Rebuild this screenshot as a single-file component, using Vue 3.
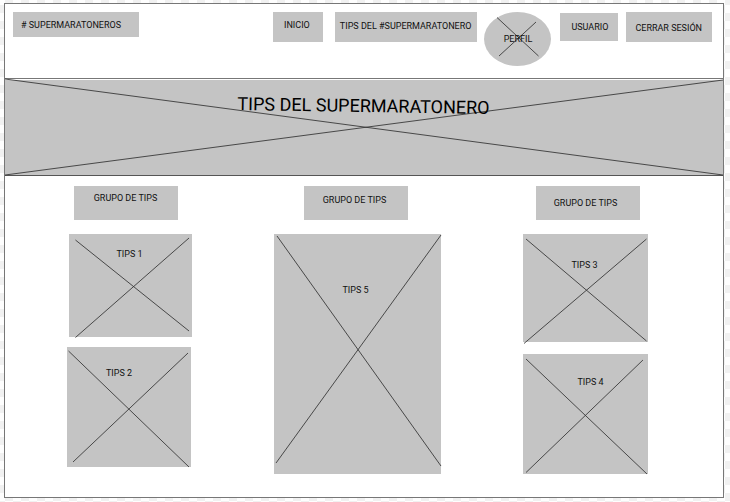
<script setup>
const navItems = [
  { label: 'INICIO', kind: 'home' },
  { label: 'TIPS DEL #SUPERMARATONERO', kind: 'tips' },
  { label: 'PERFIL', kind: 'profile' },
  { label: 'USUARIO', kind: 'user' },
  { label: 'CERRAR SESIÓN', kind: 'logout' },
]

// Each card carries its drawing area and the two crossing strokes [x1, y1, x2, y2].
const groups = [
  {
    id: 'left',
    title: 'GRUPO DE TIPS',
    cards: [
      { id: 1, w: 124, h: 103, lines: [[6.5, 6, 121, 97], [121, 4, 6.5, 103.5]] },
      { id: 2, w: 124, h: 120, lines: [[1.5, 4, 122, 120], [121, 6, 6, 115]] },
    ],
  },
  {
    id: 'middle',
    title: 'GRUPO DE TIPS',
    cards: [{ id: 5, w: 167, h: 241, lines: [[3, 2, 167, 233], [167, 1, 2, 230]] }],
  },
  {
    id: 'right',
    title: 'GRUPO DE TIPS',
    cards: [
      { id: 3, w: 124, h: 108, lines: [[3, 5, 122.5, 107], [122.5, 5, 1, 109.5]] },
      { id: 4, w: 124, h: 120, lines: [[3, 5, 123, 120], [119, 6, 3, 118.5]] },
    ],
  },
]
</script>

<template>
  <div class="frame">
    <header class="top">
      <a class="box brand" href="#"># SUPERMARATONEROS</a>
      <nav class="nav">
        <a v-for="item in navItems" :key="item.kind" class="box" :class="item.kind" href="#">
          <svg v-if="item.kind === 'profile'" class="cross" viewBox="0 0 67 54" preserveAspectRatio="none" aria-hidden="true">
            <line x1="13" y1="5.5" x2="54.5" y2="44" />
            <line x1="52" y1="10" x2="15" y2="44" />
          </svg>
          <span class="text">{{ item.label }}</span>
        </a>
      </nav>
    </header>

    <section class="banner">
      <svg class="cross" viewBox="0 0 718 95" preserveAspectRatio="none" aria-hidden="true">
        <line x1="0" y1="0" x2="718" y2="95" />
        <line x1="0" y1="95" x2="718" y2="1" />
      </svg>
      <h1 class="title">TIPS DEL SUPERMARATONERO</h1>
    </section>

    <main class="groups">
      <section v-for="group in groups" :key="group.id" class="group" :class="group.id">
        <h2 class="heading">{{ group.title }}</h2>
        <article v-for="card in group.cards" :key="card.id" class="card" :class="'tip-' + card.id">
          <svg class="cross" :viewBox="`0 0 ${card.w} ${card.h}`" preserveAspectRatio="none" aria-hidden="true">
            <line v-for="(l, i) in card.lines" :key="i" :x1="l[0]" :y1="l[1]" :x2="l[2]" :y2="l[3]" />
          </svg>
          <h3 class="label">TIPS {{ card.id }}</h3>
        </article>
      </section>
    </main>
  </div>
</template>

<style>
html {
  background: repeating-conic-gradient(#f1f1f1 0 25%, #fefefe 0 50%) 5px 5px / 16px 16px;
}
</style>

<style scoped>
.frame {
  box-sizing: border-box;
  margin: 3px 6px 4px 4px;
  border: 1px solid #777;
  background: #fff;
  color: #111;
  font-family: Roboto, "Liberation Sans", sans-serif;
  font-size: 9px;
  line-height: 12px;
}

.top {
  display: flex;
  align-items: flex-start;
  justify-content: space-between;
  box-sizing: border-box;
  min-height: 74px;
  padding: 8px 11px 0 8px;
}

.nav {
  display: flex;
  align-items: flex-start;
  gap: 7px;
}

.box {
  display: flex;
  align-items: center;
  box-sizing: border-box;
  min-height: 30px;
  background: #c4c4c4;
  color: inherit;
  text-decoration: none;
  white-space: nowrap;
}

.brand {
  min-height: 25px;
  padding: 0 18px 0 8px;
}

.home {
  margin-right: 5px;
  padding: 0 13px 4px 11px;
}

.tips {
  padding: 0 6px 2px 5px;
}

.profile {
  position: relative;
  justify-content: center;
  width: 67px;
  height: 54px;
  border-radius: 50%;
}

.user {
  min-height: 28px;
  margin: 1px 1px 0 2px;
  padding: 0 10px 0 11px;
}

.logout {
  padding: 2px 10px 0 9px;
}

.cross {
  position: absolute;
  inset: 0;
  width: 100%;
  height: 100%;
  overflow: visible;
}

.cross line {
  stroke: #333;
  stroke-width: 1px;
  stroke-opacity: 0.85;
  vector-effect: non-scaling-stroke;
}

.text,
.title,
.label {
  position: relative;
}

.banner {
  position: relative;
  display: flex;
  justify-content: center;
  box-sizing: border-box;
  height: 98px;
  padding: 15px 2px 0 0;
  border-top: 1px solid #777;
  border-bottom: 1px solid #555;
  background: #c4c4c4;
  box-shadow: inset 0 1px #fff;
}

.title,
.heading,
.label {
  margin: 0;
  font-weight: 400;
}

.title {
  color: #000;
  font-size: 18px;
  line-height: 24px;
  transform: rotate(0.9deg);
}

.groups {
  display: grid;
  grid-template-columns: 125fr 167fr 125fr;
  gap: 82px;
  padding: 10px 75px 23px 62px;
}

.group {
  display: flex;
  flex-direction: column;
}

.heading,
.label {
  font-size: 9px;
  line-height: 12px;
  text-align: center;
}

.heading {
  box-sizing: border-box;
  width: 104px;
  height: 34px;
  margin-bottom: 14px;
  align-self: center;
  background: #c4c4c4;
}

.left .heading {
  margin-right: 8px;
  padding-top: 6px;
}

.middle .heading {
  margin-right: 4px;
  padding: 8px 2px 0 0;
}

.right .heading {
  margin-left: 4px;
  padding: 11px 4px 0 0;
}

.card {
  position: relative;
  box-sizing: border-box;
  background: #c4c4c4;
}

.tip-1 {
  height: 103px;
  margin: 0 0 10px 2px;
  padding: 14px 2px 0 0;
}

.tip-2 {
  height: 120px;
  margin-right: 1px;
  padding: 20px 20px 0 0;
}

.tip-5 {
  height: 240px;
  padding: 50px 4px 0 0;
}

.tip-3 {
  height: 108px;
  margin-bottom: 12px;
  padding: 25px 2px 0 0;
}

.tip-4 {
  height: 120px;
  padding: 22px 0 0 10px;
}
</style>
